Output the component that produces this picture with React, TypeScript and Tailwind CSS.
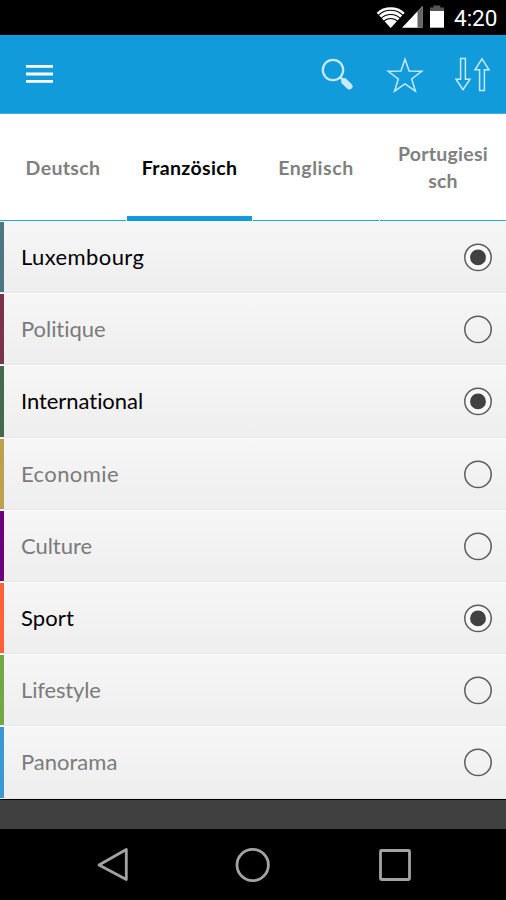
import clsx from "clsx";

const TABS = [
  { label: "Deutsch", className: "tracking-[0.35px]" },
  { label: "Französich", className: "tracking-[0.35px]", active: true },
  { label: "Englisch", className: "tracking-[0.55px]" },
  { label: "Portugiesisch", className: "tracking-[0.25px]" },
];

const CATEGORIES = [
  { name: "Luxembourg", color: "bg-[#4b7684]", tracking: "tracking-[0.4px]", selected: true },
  { name: "Politique", color: "bg-[#7b324a]", tracking: "tracking-[-0.05px]", selected: false },
  { name: "International", color: "bg-[#436b4b]", tracking: "tracking-[-0.05px]", selected: true },
  { name: "Economie", color: "bg-[#bd9f50]", tracking: "tracking-[0.4px]", selected: false },
  { name: "Culture", color: "bg-[#6c007b]", tracking: "tracking-[-0.05px]", selected: false },
  { name: "Sport", color: "bg-[#fb6239]", tracking: "tracking-[0.1px]", selected: true },
  { name: "Lifestyle", color: "bg-[#70a845]", tracking: "tracking-[-0.15px]", selected: false },
  { name: "Panorama", color: "bg-[#3c98d3]", tracking: "tracking-[0px]", selected: false },
];

function StatusBar() {
  return (
    <div className="h-[35px] shrink-0 bg-black flex items-center justify-end pr-[9px]">
      <svg width="70" height="35" viewBox="0 0 70 35" className="shrink-0">
        <path d="M.7 12.700a20.700 20.700 0 0 1 28 0L14.700 28Z" fill="#fff" />
        <path d="M2.200 15.600a17.400 17.400 0 0 1 25 0M4.800 18.700a13.700 13.700 0 0 1 19.800 0M7.700 21.400a9.800 9.800 0 0 1 14 0" fill="none" stroke="#000" strokeWidth="1.100" />
        <path d="M46.500 6v21.700H26Z" fill="#fff" />
        <path d="M41.500 11.300L46.500 6v21.700h-5Z" fill="#666" />
        <path d="M57.300 5.500h7v2H68V11.500H54v-4h3.300Z" fill="#555" />
        <path d="M54 11h14v16.700H54Z" fill="#fff" />
      </svg>
      <span className="ml-[8px] pt-px w-[43px] whitespace-nowrap font-[Roboto,sans-serif] text-[22.500px] leading-none text-white">4:20</span>
    </div>
  );
}

function Toolbar() {
  return (
    <header className="h-[79px] shrink-0 bg-[#129bda] border-b border-[#42afe2] flex items-center justify-between">
      <svg width="66" height="78" viewBox="0 0 66 78" fill="#fff">
        <path d="M26 30h27v2.800H26zM26 37.500h27v3H26zM26 45h27v2.800H26z" />
      </svg>
      <svg width="200" height="78" viewBox="0 0 200 78" fill="none" stroke="#c9e9fa">
        <circle cx="27" cy="35" r="10.200" strokeWidth="2.200" />
        <path d="M34.200 42.200l3 3" strokeWidth="2.400" />
        <path d="M38.400 46.400l4.900 4.900" strokeWidth="6.400" strokeLinecap="round" />
        <path d="M99 24.300l4.100 11.800 12.700.2-10.100 7.700 3.700 12.100L99 48.900 88.600 56.100 92.300 44 82.200 36.300l12.700-.2Z" strokeWidth="1.500" />
        <path d="M154.600 23.500h4.800v20.700h4.600l-7 10.400-7-10.400h4.600ZM173.600 55.500v-20.700H169l7-10.900 7 10.900h-4.600V55.500Z" strokeWidth="1.500" />
      </svg>
    </header>
  );
}

function Tabs() {
  return (
    <nav className="h-[107px] shrink-0 grid grid-cols-[126px_125px_126px_126px] gap-x-px bg-white">
      {TABS.map((tab) => (
        <button
          key={tab.label}
          className={clsx(
            "flex items-center justify-center px-[14px] text-[19.500px] leading-[27px] font-bold break-all",
            tab.className,
            tab.active ? "border-b-[5px] border-[#129bda] pt-[4px] text-black" : "border-b border-[#1cabe0] text-[#808080]",
          )}
        >
          {tab.label}
        </button>
      ))}
    </nav>
  );
}

function Radio({ checked }: { checked: boolean }) {
  return (
    <svg width="30" height="30" viewBox="0 0 30 30" className="shrink-0">
      <circle cx="15" cy="15.400" r="13.200" fill={checked ? "#f8f8f8" : "none"} stroke="#5c5c5c" strokeWidth="1.500" />
      {checked && <circle cx="15" cy="15.400" r="7.900" fill="#414141" />}
    </svg>
  );
}

type CategoryRowProps = { name: string; color: string; tracking: string; selected: boolean };

function CategoryRow({ name, color, tracking, selected }: CategoryRowProps) {
  return (
    <li className="h-[72.200px] flex items-stretch border-t border-white bg-linear-to-b from-[#f6f6f6] to-[#eeeeee]">
      <div className={clsx("w-1 mb-px", color)} />
      <div className="flex-1 flex items-center justify-between pl-[17px] pr-[13px] border-b border-[#e6e6e6]">
        <span className={clsx("pb-px text-[22px]", tracking, selected ? "text-black" : "text-[#7b7b7b]")}>{name}</span>
        <Radio checked={selected} />
      </div>
    </li>
  );
}

function NavigationBar() {
  return (
    <footer className="h-[71px] shrink-0 bg-black">
      <svg width="506" height="71" viewBox="0 0 506 71" fill="none" stroke="#a3a3a3" strokeWidth="2.800" strokeLinejoin="round">
        <path d="M126.300 20.500v30L99 36Z" />
        <circle cx="252.700" cy="36" r="15.700" />
        <rect x="380.500" y="21.500" width="29" height="29" rx="1" />
      </svg>
    </footer>
  );
}

export default function App() {
  return (
    <div className="w-[506px] h-[900px] flex flex-col overflow-hidden bg-[#404040] font-[Lato,sans-serif] [font-variant-ligatures:none]">
      <StatusBar />
      <Toolbar />
      <Tabs />
      <ul className="h-[578px] shrink-0 bg-[#eeeeee]">
        {CATEGORIES.map((category) => (
          <CategoryRow key={category.name} {...category} />
        ))}
      </ul>
      <div className="flex-1 border-t border-black" />
      <NavigationBar />
    </div>
  );
}
